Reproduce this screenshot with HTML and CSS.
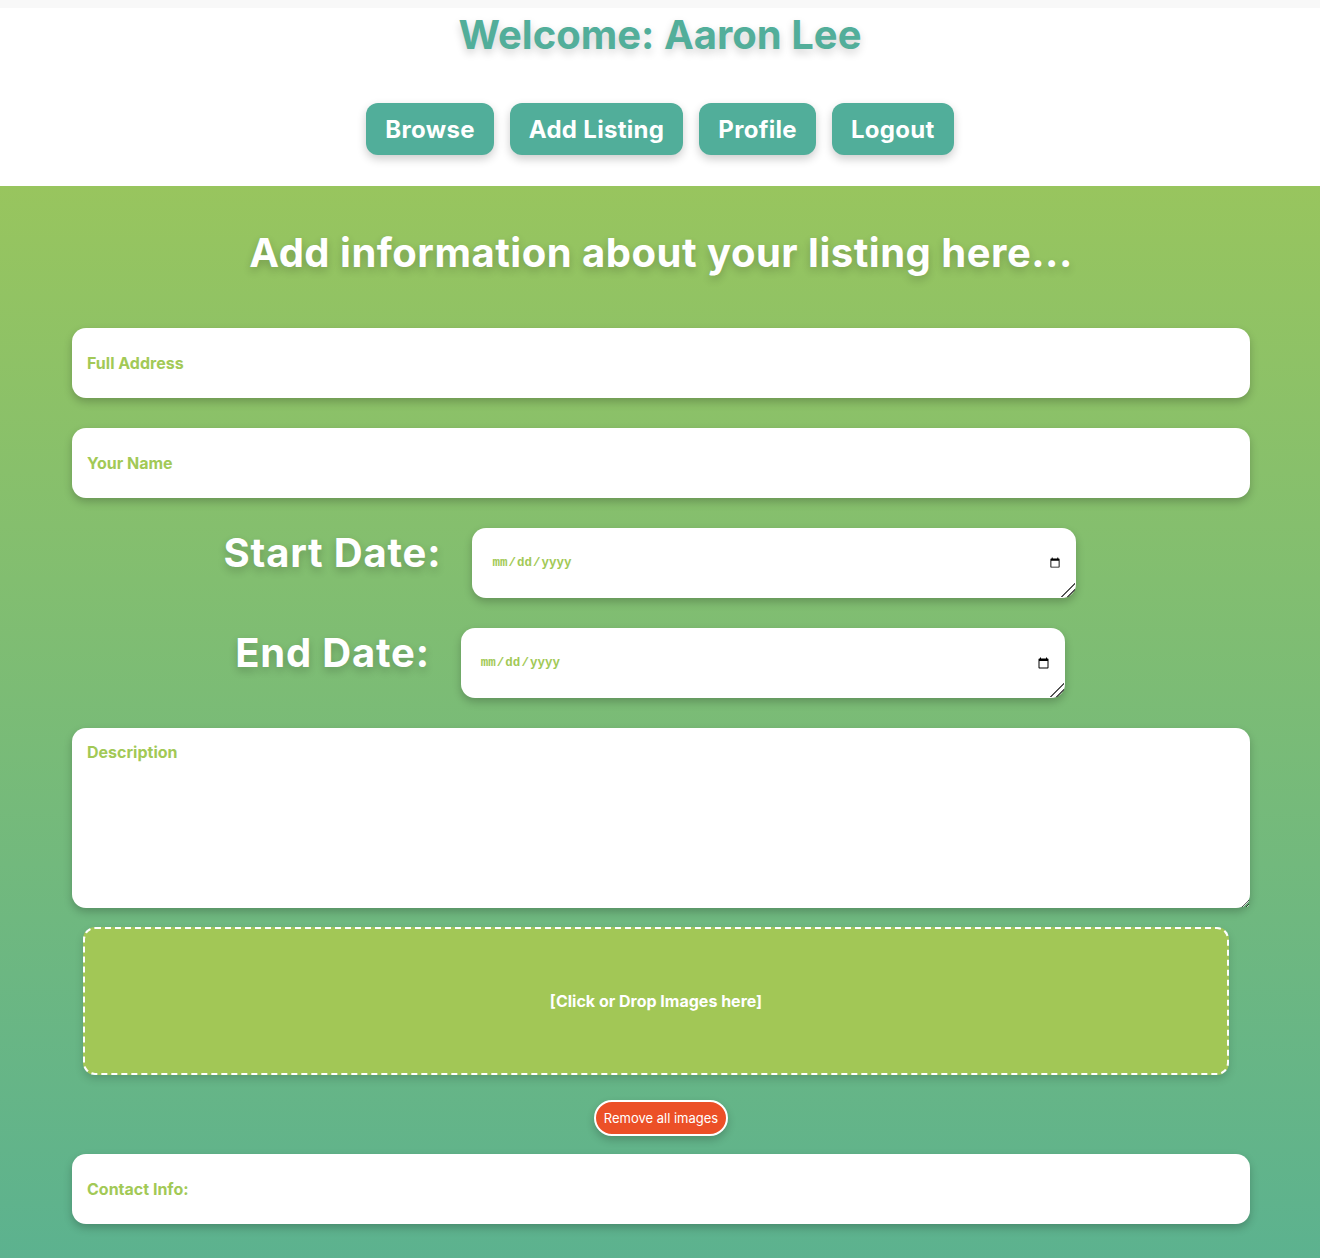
FILE: index.html
```html
<!DOCTYPE html>
<html lang="en">
<head>
<meta charset="utf-8">
<title>Add Listing</title>
<link rel="stylesheet" href="styles.css">
</head>
<body>
<header class="top">
  <h1 class="welcome">Welcome: Aaron Lee</h1>
  <nav class="nav">
    <button class="nav-btn">Browse</button>
    <button class="nav-btn">Add Listing</button>
    <button class="nav-btn">Profile</button>
    <button class="nav-btn">Logout</button>
  </nav>
</header>
<main class="panel">
  <h2 class="panel-title">Add information about your listing here...</h2>
  <form class="form">
    <input class="field" type="text" placeholder="Full Address">
    <input class="field" type="text" placeholder="Your Name">
    <div class="date-row">
      <label class="date-label">Start Date:</label>
      <span class="date-wrap"><input class="date-field" type="date"><span class="grip"></span></span>
    </div>
    <div class="date-row">
      <label class="date-label">End Date:</label>
      <span class="date-wrap"><input class="date-field" type="date"><span class="grip"></span></span>
    </div>
    <textarea class="field area" placeholder="Description"></textarea>
    <div class="dropzone">[Click or Drop Images here]</div>
    <div class="remove-wrap"><button type="button" class="remove-btn">Remove all images</button></div>
    <input class="field" type="text" placeholder="Contact Info:">
  </form>
</main>
</body>
</html>
```
FILE: styles.css
```css
html, body {
  margin: 0;
  padding: 0;
}
body {
  background: #f8f8f8;
  padding-top: 8px;
  font-family: Inter, "Noto Sans", sans-serif;
}
.top {
  background: #ffffff;
  padding: 3px 0 31px;
  text-align: center;
}
.welcome {
  margin: 0;
  font-size: 40px;
  line-height: 48px;
  font-weight: 700;
  color: #52ae9a;
  text-shadow: 0 4px 8px rgba(0,0,0,0.18);
}
.nav {
  margin-top: 44px;
  display: flex;
  justify-content: center;
  gap: 16px;
}
.nav-btn {
  height: 52px;
  padding: 0 19px;
  border: none;
  border-radius: 12px;
  background: #51ae9a;
  color: #ffffff;
  font-family: Inter, sans-serif;
  font-size: 24px;
  font-weight: 700;
  letter-spacing: 0.3px;
  box-shadow: 0 4px 10px rgba(0,0,0,0.2);
}
.panel {
  background: linear-gradient(to bottom, #98c55e 0%, #5cb28f 100%);
  padding: 43px 70px 34px 72px;
}
.panel-title {
  margin: 0 0 51px;
  text-align: center;
  font-size: 40px;
  line-height: 48px;
  font-weight: 700;
  letter-spacing: 0.5px;
  color: #ffffff;
  text-shadow: 0 4px 8px rgba(0,0,0,0.2);
}
.form {
  display: flex;
  flex-direction: column;
}
.field {
  display: block;
  box-sizing: border-box;
  width: 100%;
  height: 70px;
  margin: 0 0 30px;
  padding: 0 15px;
  border: none;
  border-radius: 14px;
  background: #ffffff;
  box-shadow: 0 4px 8px rgba(0,0,0,0.22);
  font-family: Inter, sans-serif;
  font-size: 16px;
  font-weight: 700;
  color: #a2c956;
  outline: none;
}
.field::placeholder {
  color: #a2c956;
  opacity: 1;
}
.area {
  height: 180px;
  padding: 14px 15px;
  margin-bottom: 19px;
  resize: both;
}
.date-row {
  display: flex;
  justify-content: center;
  align-items: center;
  margin: 0 0 30px;
  padding-right: 22px;
}
.date-label {
  font-size: 40px;
  line-height: 48px;
  font-weight: 700;
  letter-spacing: 0.8px;
  color: #ffffff;
  margin: 0 31px 20px 0;
  text-shadow: 0 4px 8px rgba(0,0,0,0.2);
}
.date-wrap {
  position: relative;
  display: block;
}
.date-field {
  display: block;
  box-sizing: border-box;
  width: 604px;
  height: 70px;
  padding: 0 13px 0 19px;
  border: none;
  border-radius: 14px;
  background: #ffffff;
  box-shadow: 0 4px 8px rgba(0,0,0,0.22);
  font-family: "Liberation Mono", monospace;
  font-size: 12.5px;
  font-weight: 700;
  color: #a2c956;
  outline: none;
}
.grip {
  position: absolute;
  right: 1px;
  bottom: 1px;
  width: 14px;
  height: 14px;
  background:
    linear-gradient(135deg, transparent 0 47%, #555 47% 55%, transparent 55% 69%, #555 69% 77%, transparent 77%);
  pointer-events: none;
}
.dropzone {
  box-sizing: border-box;
  margin: 0 21px 0 11px;
  height: 148px;
  border: 2px dashed #ffffff;
  border-radius: 12px;
  background: #a2c756;
  box-shadow: 0 4px 8px rgba(0,0,0,0.15);
  display: flex;
  align-items: center;
  justify-content: center;
  color: #ffffff;
  font-size: 16px;
  font-weight: 700;
}
.remove-wrap {
  display: flex;
  justify-content: center;
  margin: 25px 0 18px;
}
.remove-btn {
  height: 36px;
  padding: 0 8px;
  border: 2px solid #ffffff;
  border-radius: 18px;
  background: #ec5027;
  color: #ffffff;
  font-family: Inter, sans-serif;
  font-size: 13px;
  font-weight: 400;
  box-shadow: 0 4px 8px rgba(0,0,0,0.2);
}
.form > .field:last-child {
  margin-bottom: 0;
}
```
